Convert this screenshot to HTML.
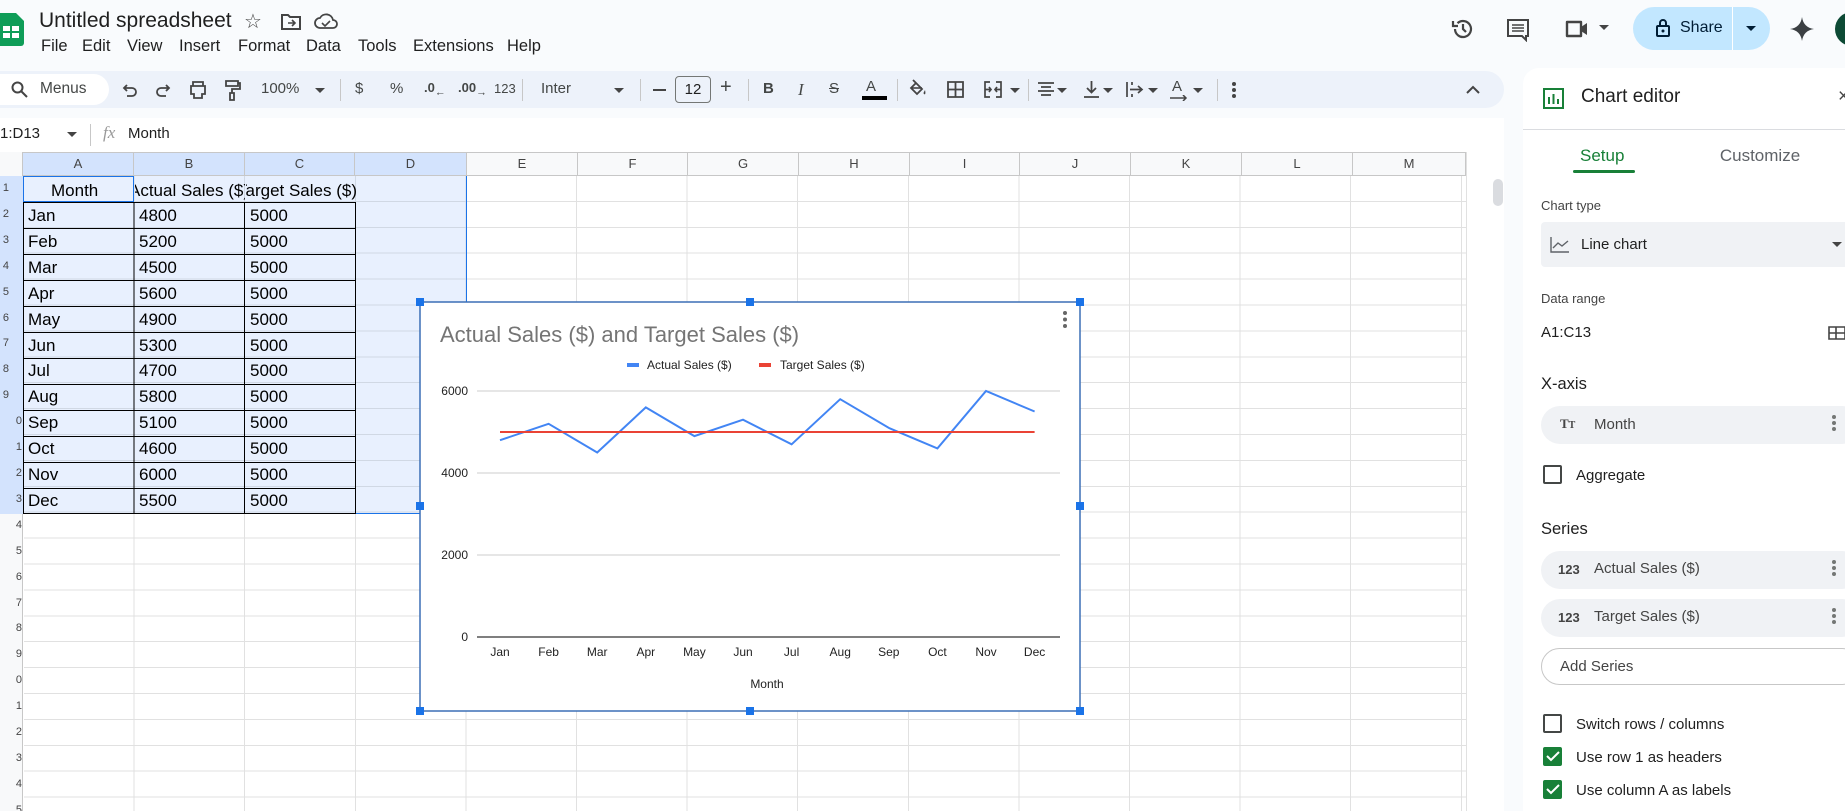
<!DOCTYPE html>
<html style="overflow:hidden;width:1845px;height:811px"><head><meta charset="utf-8">
<style>
*{box-sizing:border-box;margin:0;padding:0}
body{width:1845px;height:811px;overflow:hidden;background:#f9fbfd;font-family:"Liberation Sans",Arial,sans-serif;color:#1f1f1f;position:relative}
.a{position:absolute}
.menu span{position:absolute;top:37px;font-size:16.5px;color:#1f1f1f}
.tb{position:absolute;top:71px;left:0;width:1504px;height:37px;background:#edf2fa;border-radius:0 20px 20px 0}
.ti{position:absolute;top:80px;font-size:15px;color:#444746}
.sep{position:absolute;top:79px;width:1px;height:22px;background:#c7c7c7}
.hd{position:absolute;top:152px;height:24px;font-size:13px;line-height:24px;text-align:center;color:#444;border-right:1px solid #c7c7c7}
.p{position:absolute;font-size:15px;color:#1f1f1f}
.chip{position:absolute;left:1541px;width:320px;height:38px;border-radius:19px;background:#f0f2f5}
.cb{position:absolute;left:1543px;width:19px;height:19px;border:2px solid #444746;border-radius:2px}
.cbg{border-color:#188038;background:#188038}
.dots{position:absolute;left:1832px;width:4px}
.dots i{display:block;width:4px;height:4px;border-radius:2px;background:#747775;margin-bottom:2px}
.clip{position:absolute;overflow:hidden;height:26px;font-size:17px;line-height:27px;color:#000;white-space:nowrap}
.clip span{position:absolute;top:0}
</style></head><body>

<!-- header -->
<svg class="a" style="left:0;top:13px" width="24" height="33" viewBox="0 0 24 33"><path d="M0 0h16l8 8v22a3 3 0 0 1-3 3H0z" fill="#0f9d58"/><rect x="3" y="13" width="16" height="12" fill="#fff"/><path d="M3 19h16M11 13v12" stroke="#0f9d58" stroke-width="2"/></svg>
<div class="a" style="left:39px;top:9px;font-size:21px;color:#1f1f1f">Untitled spreadsheet</div>
<div class="a" style="left:244px;top:9px;font-size:20px;color:#444">☆</div>
<svg class="a" style="left:281px;top:13px" width="20" height="17" viewBox="0 0 20 17"><path d="M1 2h6l2 2h10v12H1z" fill="none" stroke="#444" stroke-width="2"/><path d="M7 10h6M11 7l3 3-3 3" fill="none" stroke="#444" stroke-width="1.6"/></svg>
<svg class="a" style="left:314px;top:13px" width="24" height="17" viewBox="0 0 24 17"><path d="M6 15a5 5 0 0 1 0-10 7 7 0 0 1 13 2 4 4 0 0 1 0 8z" fill="none" stroke="#444" stroke-width="1.8"/><path d="M8 10l3 3 5-5" fill="none" stroke="#444" stroke-width="1.6"/></svg>
<div class="menu"><span style="left:41px">File</span><span style="left:82px">Edit</span><span style="left:127px">View</span><span style="left:179px">Insert</span><span style="left:238px">Format</span><span style="left:306px">Data</span><span style="left:358px">Tools</span><span style="left:413px">Extensions</span><span style="left:507px">Help</span></div>

<svg class="a" style="left:1451px;top:17px" width="24" height="24" viewBox="0 0 24 24"><path d="M4 12a8 8 0 1 0 2.5-5.8" fill="none" stroke="#444" stroke-width="2.2"/><path d="M2 4v5h5" fill="none" stroke="#444" stroke-width="2.2"/><path d="M12 7v5l3 3" fill="none" stroke="#444" stroke-width="2.2"/></svg>
<svg class="a" style="left:1506px;top:18px" width="24" height="24" viewBox="0 0 24 24"><path d="M2 2h20v16h-2v4l-4-4H2z" fill="none" stroke="#444" stroke-width="2"/><path d="M6 7h12M6 10h12M6 13h12" stroke="#444" stroke-width="1.6"/></svg>
<svg class="a" style="left:1565px;top:19px" width="26" height="20" viewBox="0 0 26 20"><path d="M2 3h14v14H2z" fill="none" stroke="#444" stroke-width="2.4" stroke-linejoin="round"/><path d="M16 8l6-4v12l-6-4z" fill="#444"/></svg>
<div class="a" style="left:1599px;top:25px;border:5px solid transparent;border-top:5px solid #444;"></div>
<div class="a" style="left:1633px;top:7px;width:137px;height:43px;border-radius:22px;background:#c2e7ff"></div>
<div class="a" style="left:1732px;top:7px;width:1px;height:43px;background:#fff"></div>
<svg class="a" style="left:1655px;top:18px" width="16" height="20" viewBox="0 0 16 20"><rect x="2" y="8" width="12" height="10" rx="1" fill="none" stroke="#001d35" stroke-width="2"/><path d="M5 8V5a3 3 0 0 1 6 0v3" fill="none" stroke="#001d35" stroke-width="2"/><circle cx="8" cy="13" r="1.5" fill="#001d35"/></svg>
<div class="a" style="left:1680px;top:19px;font-size:16px;color:#001d35">Share</div>
<div class="a" style="left:1746px;top:26px;border:5px solid transparent;border-top:5px solid #001d35"></div>
<svg class="a" style="left:1790px;top:17px" width="24" height="24" viewBox="0 0 24 24"><path d="M12 0C13 7 17 11 24 12 17 13 13 17 12 24 11 17 7 13 0 12 7 11 11 7 12 0z" fill="#3c4043"/></svg>
<div class="a" style="left:1835px;top:12px;width:34px;height:34px;border-radius:17px;background:#0d4a35"></div>

<!-- toolbar -->
<div class="tb"></div>
<div class="a" style="left:0;top:74px;width:109px;height:31px;border-radius:0 16px 16px 0;background:#fff"></div>
<svg class="a" style="left:11px;top:81px" width="17" height="17" viewBox="0 0 17 17"><circle cx="6.5" cy="6.5" r="5" fill="none" stroke="#444" stroke-width="2"/><path d="M10 10l6 6" stroke="#444" stroke-width="2"/></svg>
<div class="ti" style="left:40px;top:80px;font-size:15.5px">Menus</div>
<svg class="a" style="left:122px;top:82px" width="16" height="16" viewBox="0 0 16 16"><path d="M2 6h8a4 4 0 0 1 0 8H5M5 3L2 6l3 3" fill="none" stroke="#444" stroke-width="1.8"/></svg>
<svg class="a" style="left:155px;top:82px" width="16" height="16" viewBox="0 0 16 16"><path d="M14 6H6a4 4 0 0 0 0 8h5M11 3l3 3-3 3" fill="none" stroke="#444" stroke-width="1.8"/></svg>
<svg class="a" style="left:188px;top:80px" width="20" height="20" viewBox="0 0 20 20"><path d="M5 6V2h10v4M3 6h14v8h-3v4H6v-4H3z" fill="none" stroke="#444" stroke-width="1.8"/></svg>
<svg class="a" style="left:224px;top:79px" width="18" height="22" viewBox="0 0 18 22"><path d="M2 2h12v5H2zM14 4h2v6H8v4M6 14h4v7H6z" fill="none" stroke="#444" stroke-width="1.8"/></svg>
<div class="ti" style="left:261px">100%</div>
<div class="a" style="left:315px;top:88px;border:5px solid transparent;border-top:5px solid #444"></div>
<div class="sep" style="left:340px"></div>
<div class="ti" style="left:355px">$</div>
<div class="ti" style="left:390px">%</div>
<div class="ti" style="left:424px;font-weight:bold;font-size:13px">.0<sub>←</sub></div>
<div class="ti" style="left:458px;font-weight:bold;font-size:13px">.00<sub>→</sub></div>
<div class="ti" style="left:494px;font-size:13px;top:81px">123</div>
<div class="sep" style="left:522px"></div>
<div class="ti" style="left:541px">Inter</div>
<div class="a" style="left:614px;top:88px;border:5px solid transparent;border-top:5px solid #444"></div>
<div class="sep" style="left:640px"></div>
<div class="a" style="left:653px;top:89px;width:13px;height:2px;background:#444"></div>
<div class="a" style="left:675px;top:76px;width:36px;height:27px;border:1px solid #747775;border-radius:4px;font-size:15px;text-align:center;line-height:25px;color:#1f1f1f">12</div>
<div class="ti" style="left:720px;font-size:20px;top:76px">+</div>
<div class="sep" style="left:748px"></div>
<div class="ti" style="left:763px;font-weight:bold">B</div>
<div class="ti" style="left:798px;font-style:italic;font-family:'Liberation Serif',serif;font-size:17px">I</div>
<div class="ti" style="left:829px;text-decoration:line-through">S</div>
<div class="ti" style="left:866px;top:78px">A</div>
<div class="a" style="left:862px;top:96px;width:25px;height:4px;background:#000"></div>
<div class="sep" style="left:897px"></div>
<svg class="a" style="left:909px;top:78px" width="20" height="20" viewBox="0 0 20 20"><path d="M4 2l9 9-5 5-6-6 5-5" fill="none" stroke="#444" stroke-width="1.8"/><path d="M3 10h10" stroke="#444" stroke-width="1.6"/><path d="M16 12c-1 2-2 3-1 4s2 0 1-4z" fill="#444"/></svg>
<svg class="a" style="left:947px;top:81px" width="17" height="17" viewBox="0 0 17 17"><path d="M1 1h15v15H1zM8.5 1v15M1 8.5h15" fill="none" stroke="#444" stroke-width="1.8"/></svg>
<svg class="a" style="left:984px;top:81px" width="18" height="17" viewBox="0 0 18 17"><path d="M6 1H1v15h5M12 1h5v15h-5M1 8.5h6M17 8.5h-6M5 6l2 2.5L5 11M13 6l-2 2.5 2 2.5" fill="none" stroke="#444" stroke-width="1.7"/></svg>
<div class="a" style="left:1010px;top:88px;border:5px solid transparent;border-top:5px solid #444"></div>
<div class="sep" style="left:1028px"></div>
<svg class="a" style="left:1037px;top:81px" width="18" height="17" viewBox="0 0 18 17"><path d="M1 2h16M4 6h10M1 10h16M4 14h10" stroke="#444" stroke-width="1.8"/></svg>
<div class="a" style="left:1057px;top:88px;border:5px solid transparent;border-top:5px solid #444"></div>
<svg class="a" style="left:1083px;top:80px" width="17" height="19" viewBox="0 0 17 19"><path d="M8.5 1v11M4 8l4.5 4.5L13 8M1 17h15" fill="none" stroke="#444" stroke-width="1.8"/></svg>
<div class="a" style="left:1103px;top:88px;border:5px solid transparent;border-top:5px solid #444"></div>
<svg class="a" style="left:1126px;top:81px" width="18" height="17" viewBox="0 0 18 17"><path d="M1 1v15M4 8.5h12M12 5l4 3.5-4 3.5M6 1v3M6 13v3" fill="none" stroke="#444" stroke-width="1.7"/></svg>
<div class="a" style="left:1148px;top:88px;border:5px solid transparent;border-top:5px solid #444"></div>
<div class="ti" style="left:1172px;top:78px">A</div>
<svg class="a" style="left:1170px;top:95px" width="18" height="6" viewBox="0 0 18 6"><path d="M0 3h16M13 0l3 3-3 3" fill="none" stroke="#444" stroke-width="1.5"/></svg>
<div class="a" style="left:1193px;top:88px;border:5px solid transparent;border-top:5px solid #444"></div>
<div class="sep" style="left:1217px"></div>
<div class="a" style="left:1232px;top:82px;width:4px"><i style="display:block;width:4px;height:4px;border-radius:2px;background:#444;margin-bottom:2px"></i><i style="display:block;width:4px;height:4px;border-radius:2px;background:#444;margin-bottom:2px"></i><i style="display:block;width:4px;height:4px;border-radius:2px;background:#444"></i></div>
<svg class="a" style="left:1466px;top:85px" width="14" height="9" viewBox="0 0 14 9"><path d="M1 8l6-6 6 6" fill="none" stroke="#444" stroke-width="2"/></svg>

<!-- formula bar -->
<div class="a" style="left:0;top:118px;width:1504px;height:34px;background:#fff"></div>
<div class="a" style="left:0;top:125px;font-size:15px">1:D13</div>
<div class="a" style="left:67px;top:132px;border:5px solid transparent;border-top:5px solid #444"></div>
<div class="a" style="left:90px;top:124px;width:1px;height:22px;background:#c7c7c7"></div>
<div class="a" style="left:103px;top:123px;font-size:17px;font-style:italic;color:#999;font-family:'Liberation Serif',serif">fx</div>
<div class="a" style="left:128px;top:125px;font-size:15px">Month</div>

<!-- grid -->
<div class="a" style="left:0;top:152px;width:1504px;height:659px;background:#fff"></div>
<div class="a" style="left:0;top:152px;width:1466px;height:24px;background:#f8f9fa;border-bottom:1px solid #c7c7c7;border-top:1px solid #c7c7c7"></div>
<div class="a" style="left:0;top:152px;width:23px;height:659px;background:#f8f9fa;border-right:1px solid #c7c7c7"></div>
<div class="a" style="left:23px;top:152px;width:444px;height:24px;background:#d3e3fd;border-top:1px solid #c7c7c7;border-bottom:1px solid #c7c7c7"></div>
<div class="a" style="left:0;top:176px;width:23px;height:338px;background:#d3e3fd"></div>
<div class="a" style="left:24px;top:176px;width:1442px;height:635px;background-image:repeating-linear-gradient(to right,transparent 0,transparent 109.6px,#e1e1e1 109.6px,#e1e1e1 110.6px),repeating-linear-gradient(to bottom,transparent 0,transparent 24.9px,#e1e1e1 24.9px,#e1e1e1 25.9px)"></div>
<div class="a" style="left:24px;top:176px;width:443px;height:338px;background:#e8f0fe;background-image:repeating-linear-gradient(to right,transparent 0,transparent 109.6px,#d0d8e4 109.6px,#d0d8e4 110.6px),repeating-linear-gradient(to bottom,transparent 0,transparent 24.9px,#d0d8e4 24.9px,#d0d8e4 25.9px);border:1px solid #1a73e8;border-left:none;border-top:none"></div>
<div class="a" style="left:23px;top:176px;width:111px;height:26px;border:1.5px solid #1a73e8"></div>
<div class="a" style="left:23px;top:202px;width:333px;height:312px;border:1px solid #000;background-image:repeating-linear-gradient(to right,transparent 0,transparent 109.6px,#000 109.6px,#000 110.6px),repeating-linear-gradient(to bottom,transparent 0,transparent 25px,#000 25px,#000 26px)"></div>
<div class="hd" style="left:23px;width:111px">A</div><div class="hd" style="left:134px;width:111px">B</div><div class="hd" style="left:245px;width:110px">C</div><div class="hd" style="left:355px;width:112px">D</div><div class="hd" style="left:467px;width:111px">E</div><div class="hd" style="left:578px;width:110px">F</div><div class="hd" style="left:688px;width:111px">G</div><div class="hd" style="left:799px;width:111px">H</div><div class="hd" style="left:910px;width:110px">I</div><div class="hd" style="left:1020px;width:111px">J</div><div class="hd" style="left:1131px;width:111px">K</div><div class="hd" style="left:1242px;width:111px">L</div><div class="hd" style="left:1353px;width:113px">M</div>
<div class="a" style="left:1466px;top:152px;width:38px;height:659px;background:#fff;border-left:1px solid #e1e1e1"></div>
<div class="a" style="left:1493px;top:179px;width:10px;height:27px;border-radius:5px;background:#dadce0"></div>

<div class="a" style="left:0;top:176px;width:22px;height:635px;font-size:11px;line-height:25.9px;text-align:right;color:#444;overflow:hidden">
<div style="margin-right:13px">1</div><div style="margin-right:13px">2</div><div style="margin-right:13px">3</div><div style="margin-right:13px">4</div><div style="margin-right:13px">5</div><div style="margin-right:13px">6</div><div style="margin-right:13px">7</div><div style="margin-right:13px">8</div><div style="margin-right:13px">9</div><div>0</div><div>1</div><div>2</div><div>3</div><div>4</div><div>5</div><div>6</div><div>7</div><div>8</div><div>9</div><div>0</div><div>1</div><div>2</div><div>3</div><div>4</div><div>5</div></div>

<div class="clip" style="left:24px;top:177px;width:109px"><span style="left:27px">Month</span></div>
<div class="clip" style="left:135px;top:177px;width:110px"><span style="left:-6px">Actual Sales ($)</span></div>
<div class="clip" style="left:246px;top:177px;width:220px"><span style="left:-9px">Target Sales ($)</span></div>
<div class="a" style="left:24px;top:203px;width:333px;font-size:17px;line-height:25.9px;color:#000">
<div style="display:flex"><span style="width:111px;padding-left:4px">Jan</span><span style="width:111px;padding-left:4px">4800</span><span style="padding-left:4px">5000</span></div>
<div style="display:flex"><span style="width:111px;padding-left:4px">Feb</span><span style="width:111px;padding-left:4px">5200</span><span style="padding-left:4px">5000</span></div>
<div style="display:flex"><span style="width:111px;padding-left:4px">Mar</span><span style="width:111px;padding-left:4px">4500</span><span style="padding-left:4px">5000</span></div>
<div style="display:flex"><span style="width:111px;padding-left:4px">Apr</span><span style="width:111px;padding-left:4px">5600</span><span style="padding-left:4px">5000</span></div>
<div style="display:flex"><span style="width:111px;padding-left:4px">May</span><span style="width:111px;padding-left:4px">4900</span><span style="padding-left:4px">5000</span></div>
<div style="display:flex"><span style="width:111px;padding-left:4px">Jun</span><span style="width:111px;padding-left:4px">5300</span><span style="padding-left:4px">5000</span></div>
<div style="display:flex"><span style="width:111px;padding-left:4px">Jul</span><span style="width:111px;padding-left:4px">4700</span><span style="padding-left:4px">5000</span></div>
<div style="display:flex"><span style="width:111px;padding-left:4px">Aug</span><span style="width:111px;padding-left:4px">5800</span><span style="padding-left:4px">5000</span></div>
<div style="display:flex"><span style="width:111px;padding-left:4px">Sep</span><span style="width:111px;padding-left:4px">5100</span><span style="padding-left:4px">5000</span></div>
<div style="display:flex"><span style="width:111px;padding-left:4px">Oct</span><span style="width:111px;padding-left:4px">4600</span><span style="padding-left:4px">5000</span></div>
<div style="display:flex"><span style="width:111px;padding-left:4px">Nov</span><span style="width:111px;padding-left:4px">6000</span><span style="padding-left:4px">5000</span></div>
<div style="display:flex"><span style="width:111px;padding-left:4px">Dec</span><span style="width:111px;padding-left:4px">5500</span><span style="padding-left:4px">5000</span></div>
</div>

<!-- chart -->
<svg class="a" style="left:416px;top:298px" width="668" height="417" viewBox="-4 -4 668 417" font-family="Liberation Sans, Arial, sans-serif">
<rect x="0" y="0" width="660" height="409" fill="#fff" stroke="#3b6fb6" stroke-width="1.5"/>
<text x="20" y="40" font-size="22" fill="#757575">Actual Sales ($) and Target Sales ($)</text>
<circle cx="645" cy="11" r="2" fill="#666"/><circle cx="645" cy="17.5" r="2" fill="#666"/><circle cx="645" cy="24" r="2" fill="#666"/>
<rect x="207" y="61" width="12" height="4" fill="#4285f4"/><text x="227" y="67" font-size="12" fill="#222">Actual Sales ($)</text>
<rect x="339" y="61" width="12" height="4" fill="#ea4335"/><text x="360" y="67" font-size="12" fill="#222">Target Sales ($)</text>
<g stroke="#ccc" stroke-width="1"><path d="M57 89H640M57 171H640M57 253H640"/></g>
<path d="M57 335H640" stroke="#333" stroke-width="1.3"/>
<g font-size="12" fill="#222" text-anchor="end"><text x="48" y="93">6000</text><text x="48" y="175">4000</text><text x="48" y="257">2000</text><text x="48" y="339">0</text></g>
<polyline fill="none" stroke="#4285f4" stroke-width="2" points="80,138.2 128.6,121.8 177.2,150.5 225.8,105.4 274.4,134.1 323,117.7 371.6,142.3 420.2,97.2 468.8,125.9 517.4,146.4 566,89 614.6,109.5"/>
<path d="M80 130H614.6" stroke="#ea4335" stroke-width="2"/>
<g font-size="12" fill="#222" text-anchor="middle"><text x="80" y="354">Jan</text><text x="128.6" y="354">Feb</text><text x="177.2" y="354">Mar</text><text x="225.8" y="354">Apr</text><text x="274.4" y="354">May</text><text x="323" y="354">Jun</text><text x="371.6" y="354">Jul</text><text x="420.2" y="354">Aug</text><text x="468.8" y="354">Sep</text><text x="517.4" y="354">Oct</text><text x="566" y="354">Nov</text><text x="614.6" y="354">Dec</text>
<text x="347" y="386">Month</text></g>
<g fill="#1a73e8"><rect x="-4" y="-4" width="8" height="8"/><rect x="326" y="-4" width="8" height="8"/><rect x="656" y="-4" width="8" height="8"/><rect x="-4" y="200" width="8" height="8"/><rect x="656" y="200" width="8" height="8"/><rect x="-4" y="405" width="8" height="8"/><rect x="326" y="405" width="8" height="8"/><rect x="656" y="405" width="8" height="8"/></g>
</svg>

<!-- side panel -->
<div class="a" style="left:1523px;top:68px;width:322px;height:743px;background:#fff;border-radius:16px 0 0 0"></div>
<svg class="a" style="left:1543px;top:88px" width="21" height="21" viewBox="0 0 21 21"><rect x="1" y="1" width="19" height="19" fill="none" stroke="#188038" stroke-width="2"/><path d="M6 9v7M10.5 6v10M15 11v5" stroke="#188038" stroke-width="2"/></svg>
<div class="a" style="left:1581px;top:86px;font-size:19px;color:#1f1f1f">Chart editor</div>
<div class="a" style="left:1838px;top:86px;font-size:19px;color:#444">×</div>
<div class="a" style="left:1523px;top:129px;width:322px;height:1px;background:#dadce0"></div>
<div class="a" style="left:1580px;top:146px;font-size:17px;color:#188038">Setup</div>
<div class="a" style="left:1695px;top:146px;font-size:17px;color:#5f6368;width:130px;text-align:center">Customize</div>
<div class="a" style="left:1573px;top:170px;width:62px;height:3px;background:#188038;border-radius:2px"></div>
<div class="p" style="left:1541px;top:198px;font-size:13px;color:#444">Chart type</div>
<div class="a" style="left:1541px;top:222px;width:320px;height:45px;background:#f0f2f5;border-radius:4px"></div>
<svg class="a" style="left:1550px;top:236px" width="20" height="17" viewBox="0 0 20 17"><path d="M1 1v15h18" fill="none" stroke="#5f6368" stroke-width="1.4"/><path d="M3 12l5-5 4 3 6-5" fill="none" stroke="#5f6368" stroke-width="1.4"/></svg>
<div class="p" style="left:1581px;top:236px">Line chart</div>
<div class="a" style="left:1832px;top:242px;border:5px solid transparent;border-top:5px solid #444"></div>
<div class="p" style="left:1541px;top:291px;font-size:13px;color:#444">Data range</div>
<div class="p" style="left:1541px;top:324px">A1:C13</div>
<svg class="a" style="left:1828px;top:326px" width="17" height="14" viewBox="0 0 17 14"><path d="M1 1h16v12H1zM1 7h16M8 1v12" fill="none" stroke="#444" stroke-width="1.6"/></svg>
<div class="p" style="left:1541px;top:375px;font-size:16.5px">X-axis</div>
<div class="chip" style="top:406px"></div>
<div class="p" style="left:1560px;top:416px;font-size:13px;font-weight:bold;color:#444;font-family:'Liberation Serif',serif">T<span style="font-size:10px">T</span></div>
<div class="p" style="left:1594px;top:416px;color:#444">Month</div>
<div class="dots" style="top:415px"><i></i><i></i><i></i></div>
<div class="cb" style="top:465px"></div>
<div class="p" style="left:1576px;top:467px">Aggregate</div>
<div class="p" style="left:1541px;top:520px;font-size:16.5px">Series</div>
<div class="chip" style="top:551px"></div>
<div class="p" style="left:1558px;top:562px;font-size:13px;font-weight:bold;color:#444">123</div>
<div class="p" style="left:1594px;top:560px;color:#444">Actual Sales ($)</div>
<div class="dots" style="top:560px"><i></i><i></i><i></i></div>
<div class="chip" style="top:599px"></div>
<div class="p" style="left:1558px;top:610px;font-size:13px;font-weight:bold;color:#444">123</div>
<div class="p" style="left:1594px;top:608px;color:#444">Target Sales ($)</div>
<div class="dots" style="top:608px"><i></i><i></i><i></i></div>
<div class="a" style="left:1541px;top:648px;width:320px;height:37px;border:1px solid #c7c7c7;border-radius:19px"></div>
<div class="p" style="left:1560px;top:658px;color:#444">Add Series</div>
<div class="cb" style="top:714px"></div>
<div class="p" style="left:1576px;top:716px">Switch rows / columns</div>
<div class="cb cbg" style="top:747px"></div>
<svg class="a" style="left:1546px;top:751px" width="14" height="11" viewBox="0 0 14 11"><path d="M1 5l4 4 8-8" fill="none" stroke="#fff" stroke-width="2"/></svg>
<div class="p" style="left:1576px;top:749px">Use row 1 as headers</div>
<div class="cb cbg" style="top:780px"></div>
<svg class="a" style="left:1546px;top:784px" width="14" height="11" viewBox="0 0 14 11"><path d="M1 5l4 4 8-8" fill="none" stroke="#fff" stroke-width="2"/></svg>
<div class="p" style="left:1576px;top:782px">Use column A as labels</div>
</body></html>
